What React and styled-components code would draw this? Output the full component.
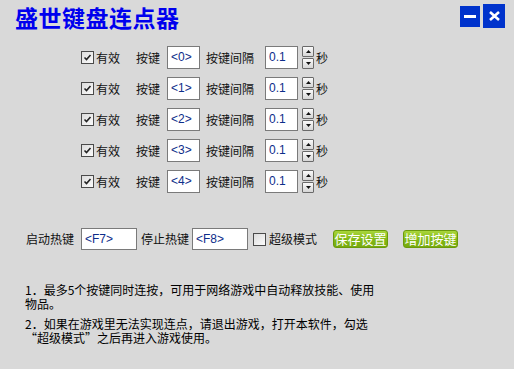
import React from 'react';
import styled, { createGlobalStyle } from 'styled-components';

const GlobalStyle = createGlobalStyle`
  body {
    margin: 0;
    background: #d9d9d9;
  }
  * {
    box-sizing: border-box;
  }
`;

const keys = ['<0>', '<1>', '<2>', '<3>', '<4>'];

const CheckBox = ({ checked }) => (
  <Box>
    {checked && (
      <svg width='9' height='9' viewBox='0 0 9 9'>
        <path d='M1.5 4.5 L3.5 6.5 L7.5 2' fill='none' stroke='#222' strokeWidth='1.6' />
      </svg>
    )}
  </Box>
);

const Spinner = () => (
  <SpinBox>
    <SpinBtn>
      <svg width='5' height='3' viewBox='0 0 5 3'>
        <path d='M0 3 L2.5 0 L5 3 Z' fill='#111' />
      </svg>
    </SpinBtn>
    <SpinBtn>
      <svg width='5' height='3' viewBox='0 0 5 3'>
        <path d='M0 0 L2.5 3 L5 0 Z' fill='#111' />
      </svg>
    </SpinBtn>
  </SpinBox>
);

const App = () => {
  return (
    <>
      <GlobalStyle />
      <Window>
        <TitleBar>
          <Title>盛世键盘连点器</Title>
          <WinButtons>
            <MinButton>
              <svg width='12' height='3' viewBox='0 0 12 3'>
                <rect width='12' height='3' fill='#fff' />
              </svg>
            </MinButton>
            <CloseButton>
              <svg width='11' height='10' viewBox='0 0 11 10'>
                <path d='M1 1 L10 9 M10 1 L1 9' stroke='#fff' strokeWidth='2.6' />
              </svg>
            </CloseButton>
          </WinButtons>
        </TitleBar>

        <KeyList>
          {keys.map((key) => (
            <KeyRow key={key}>
              <CheckBox checked />
              <Label $ml={2}>有效</Label>
              <Label $ml={16}>按键</Label>
              <TextBox $w={33} $ml={7}>{key}</TextBox>
              <Label $ml={6}>按键间隔</Label>
              <TextBox $w={33} $ml={11}>0.1</TextBox>
              <Spinner />
              <Label $ml={2}>秒</Label>
            </KeyRow>
          ))}
        </KeyList>

        <HotkeyRow>
          <Label>启动热键</Label>
          <TextBox $w={56} $h={22} $ml={7}>{'<F7>'}</TextBox>
          <Label $ml={4}>停止热键</Label>
          <TextBox $w={56} $h={22} $ml={3}>{'<F8>'}</TextBox>
          <CheckBox />
          <Label $ml={3}>超级模式</Label>
          <GreenButton $ml={16}>保存设置</GreenButton>
          <GreenButton $ml={15}>增加按键</GreenButton>
        </HotkeyRow>

        <Notes>
          <Note>
            1．最多5个按键同时连按，可用于网络游戏中自动释放技能、使用
            <br />
            物品。
          </Note>
          <Note>
            2．如果在游戏里无法实现连点，请退出游戏，打开本软件，勾选
            <br />
            “超级模式”之后再进入游戏使用。
          </Note>
        </Notes>
      </Window>
    </>
  );
};

export default App;

const Window = styled.div`
  width: 514px;
  height: 369px;
  background: #d9d9d9;
  font-family: 'Noto Sans CJK SC', 'Liberation Sans', sans-serif;
  font-size: 12px;
  color: #111;
  overflow: hidden;
`;

const TitleBar = styled.div`
  display: flex;
  justify-content: space-between;
  align-items: flex-start;
  height: 40px;
  padding: 4px 9px 0 15px;
`;

const Title = styled.h1`
  margin: 0;
  font-size: 23px;
  line-height: 26px;
  letter-spacing: 0.5px;
  font-weight: 700;
  color: #0000ee;
`;

const WinButtons = styled.div`
  display: flex;
  align-items: center;
  gap: 3px;
`;

const MinButton = styled.div`
  width: 20px;
  height: 21px;
  background: #0033cc;
  display: flex;
  align-items: center;
  justify-content: center;
`;

const CloseButton = styled.div`
  width: 22px;
  height: 24px;
  background: #0033cc;
  display: flex;
  align-items: center;
  justify-content: center;
`;

const KeyList = styled.div`
  display: flex;
  flex-direction: column;
  gap: 8px;
  padding-left: 81px;
  margin-top: 6px;
`;

const KeyRow = styled.div`
  display: flex;
  align-items: center;
  height: 23px;
`;

const Box = styled.span`
  width: 13px;
  height: 13px;
  border: 1px solid #4a4a4a;
  background: linear-gradient(135deg, #dcdcdc, #fbfbfb);
  display: inline-flex;
  align-items: center;
  justify-content: center;
  flex: none;
`;

const Label = styled.span`
  margin-left: ${({ $ml }) => $ml || 0}px;
  line-height: 14px;
  white-space: nowrap;
`;

const TextBox = styled.div`
  width: ${({ $w }) => $w}px;
  height: ${({ $h }) => $h || 23}px;
  margin-left: ${({ $ml }) => $ml || 0}px;
  border: 1px solid #7a7a7a;
  background: #fff;
  padding: 3px 0 0 3px;
  font-family: 'Liberation Sans', sans-serif;
  font-size: 12px;
  color: #0d2d8a;
  flex: none;
`;

const SpinBox = styled.div`
  display: flex;
  flex-direction: column;
  gap: 1px;
  margin-left: 4px;
`;

const SpinBtn = styled.div`
  width: 12px;
  height: 11px;
  border: 1px solid #6a6a6a;
  border-radius: 1px;
  background: linear-gradient(#fafafa, #d6d6d6);
  display: flex;
  align-items: center;
  justify-content: center;
`;

const HotkeyRow = styled.div`
  display: flex;
  align-items: center;
  padding-left: 26px;
  margin-top: 35px;
  height: 22px;

  & > ${Box} {
    margin-left: 5px;
  }
`;

const GreenButton = styled.div`
  margin-left: ${({ $ml }) => $ml || 0}px;
  width: 55px;
  height: 18px;
  border: 1px solid #6a9a0c;
  border-radius: 3px;
  background: linear-gradient(#a9d63c, #82b815 55%, #77aa0e);
  color: #fff;
  font-size: 13px;
  line-height: 16px;
  text-align: center;
  white-space: nowrap;
`;

const Notes = styled.div`
  display: flex;
  flex-direction: column;
  gap: 6px;
  padding-left: 25px;
  margin-top: 33px;
`;

const Note = styled.p`
  margin: 0;
  font-size: 12px;
  line-height: 14px;
  color: #000;
`;
